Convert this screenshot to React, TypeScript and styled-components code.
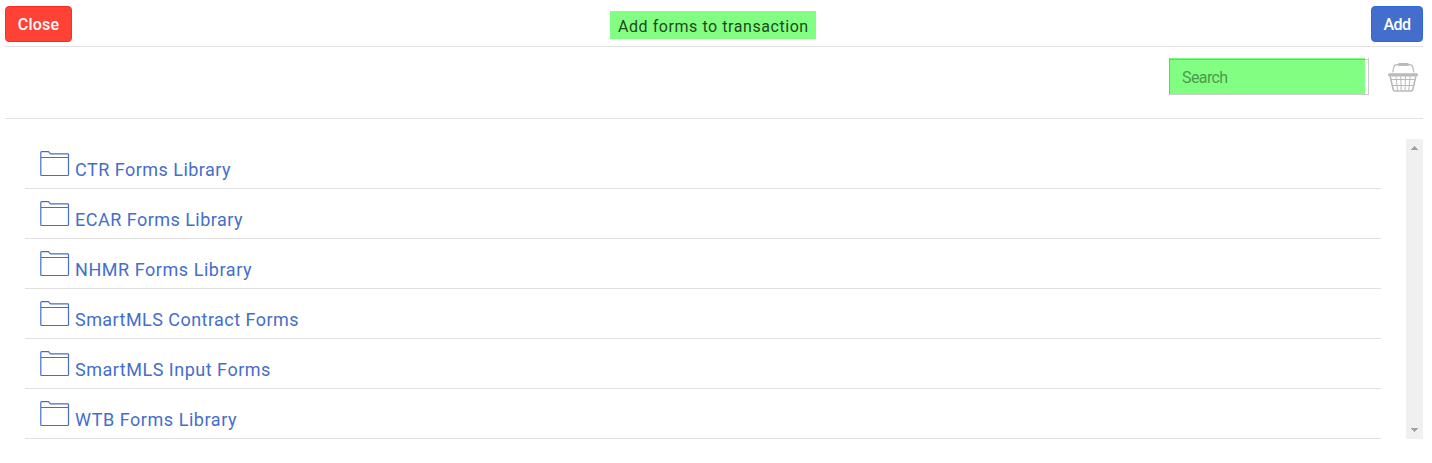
import React from "react";
import styled, { createGlobalStyle } from "styled-components";

const GlobalStyle = createGlobalStyle`
  *, *::before, *::after { box-sizing: border-box; }
  body {
    margin: 0;
    background: #fff;
    font-family: Roboto, "Noto Sans", sans-serif;
  }
`;

const Page = styled.main`
  display: flex;
  flex-direction: column;
  height: 463px;
  padding: 0 9px 0 5px;
`;

const Header = styled.header`
  display: grid;
  grid-template-columns: 605px 206px 1fr;
  height: 47px;
  padding-top: 6px;
  border-bottom: 1px solid #e2e2e2;
`;

const Button = styled.button<{ $tone: "danger" | "primary" }>`
  justify-self: ${(p) => (p.$tone === "danger" ? "start" : "end")};
  width: ${(p) => (p.$tone === "danger" ? 67 : 52)}px;
  height: 36px;
  padding: 1px 0 0;
  border: 1px solid ${(p) => (p.$tone === "danger" ? "#ff2a20" : "#2c68e0")};
  border-radius: 4px;
  background: ${(p) => (p.$tone === "danger" ? "#ff4136" : "#446ecb")};
  color: #fff;
  font: 500 16px/33px Roboto, sans-serif;
  letter-spacing: ${(p) => (p.$tone === "danger" ? 0.2 : -0.6)}px;
`;

const Title = styled.h1`
  height: 28px;
  margin: 5px 0 0;
  padding-left: 8px;
  background: #82ff82;
  color: #1d4a1d;
  font-size: 16px;
  font-weight: 400;
  line-height: 31px;
  letter-spacing: 0.56px;
  white-space: nowrap;
`;

const Toolbar = styled.div`
  display: flex;
  justify-content: flex-end;
  height: 72px;
  padding: 11px 4px 0 0;
  border-bottom: 1px solid #e2e2e2;
`;

const SearchBox = styled.label`
  display: flex;
  width: 200px;
  height: 37px;
  padding-right: 3px;
  border: 1px solid #ccc;
  border-top: 0;
  background: linear-gradient(#ccc, #ccc) 0 1px / 100% 1px no-repeat;
`;

const SearchInput = styled.input`
  width: 196px;
  height: 36px;
  margin-left: -1px;
  padding: 3px 12px 0 12px;
  border: 1px solid #66cc66;
  border-width: 0 0 0 1px;
  border-radius: 0;
  outline: 0;
  background: linear-gradient(#68cc68, #68cc68) 0 1px / 100% 1px no-repeat #82ff82;
  font: 400 16px/20px Roboto, sans-serif;
  letter-spacing: -0.6px;
  &::placeholder { color: #4b9a4b; opacity: 1; }
`;

const Basket = styled.svg`
  width: 32px;
  height: 32px;
  margin: 4px 0 0 18px;
`;

const Content = styled.section`
  display: flex;
  justify-content: space-between;
  height: 300px;
  margin: 20px 0 0 20px;
`;

const LibraryList = styled.ul`
  width: 1356px;
  margin: 0;
  padding: 0;
  list-style: none;
`;

const LibraryRow = styled.li`
  display: flex;
  height: 50px;
  padding: 12px 0 0 15px;
  border-bottom: 1px solid #e2dfe0;
  color: #446ecb;
`;

const FolderIcon = styled.svg`
  width: 30px;
  height: 26px;
  flex: none;
`;

const LibraryName = styled.span<{ $tracking: number }>`
  margin: 8px 0 0 5px;
  font-size: 18px;
  line-height: 22px;
  letter-spacing: ${(p) => p.$tracking}px;
  white-space: nowrap;
`;

const Scrollbar = styled.div`
  display: flex;
  flex-direction: column;
  justify-content: space-between;
  align-items: center;
  width: 17px;
  height: 300px;
  padding: 7px 0;
  background: #f0f0f0;
`;

const Arrow = styled.svg`
  width: 7px;
  height: 4px;
  fill: #a3a3a3;
  shape-rendering: crispEdges;
`;

const libraries = [
  { name: "CTR Forms Library", tracking: 0.48 },
  { name: "ECAR Forms Library", tracking: 0.48 },
  { name: "NHMR Forms Library", tracking: 0.55 },
  { name: "SmartMLS Contract Forms", tracking: 0.45 },
  { name: "SmartMLS Input Forms", tracking: 0.51 },
  { name: "WTB Forms Library", tracking: 0.55 },
];

export default function App() {
  return (
    <>
      <GlobalStyle />
      <Page>
        <Header>
          <Button $tone="danger">Close</Button>
          <Title>Add forms to transaction</Title>
          <Button $tone="primary">Add</Button>
        </Header>
        <Toolbar>
          <SearchBox>
            <SearchInput placeholder="Search" />
          </SearchBox>
          <Basket viewBox="0 0 32 32" fill="none" stroke="#bababa">
            <path d="M5.700 10.500 6.700 5.500Q7.300 2.700 10 2.700h12.500q2.700 0 3.300 2.800l1 5" strokeWidth="1.200" />
            <path d="M12.300 2.500h8.200" strokeWidth="3.200" strokeLinecap="round" />
            <path d="M2.500 12.800h27" strokeWidth="3.200" strokeLinecap="round" />
            <path d="M3.200 14.500 6.200 27.500q.3 1.500 1.700 1.500h16.200q1.400 0 1.700-1.500l3-13" strokeWidth="1.600" />
            <path d="M4 17.500h24M5 23.500h22M9 14.500l1.500 14M13.700 14.500l.5 14M18.500 14.500l-.5 14M23.200 14.500l-1.500 14" strokeWidth="1" />
          </Basket>
        </Toolbar>
        <Content>
          <LibraryList>
            {libraries.map(({ name, tracking }) => (
              <LibraryRow key={name}>
                <FolderIcon viewBox="0 0 30 26" fill="none" stroke="currentColor" strokeWidth="1.200">
                  <path d="M.8 6.500V1.400q0-.8.8-.8H8q.8 0 1.300.9l.5.700q.4.600 1.200.600h16.700q.800 0 .800.800v20.200q0 .700-.8.700H1.600q-.8 0-.8-.7V6.500h27.700" />
                </FolderIcon>
                <LibraryName $tracking={tracking}>{name}</LibraryName>
              </LibraryRow>
            ))}
          </LibraryList>
          <Scrollbar>
            <Arrow viewBox="0 0 7 4"><path d="M3 0h1v1h1v1h1v1h1v1H0V3h1V2h1V1h1z" /></Arrow>
            <Arrow viewBox="0 0 7 4"><path d="M0 0h7v1H6v1H5v1H4v1H3V3H2V2H1V1H0z" /></Arrow>
          </Scrollbar>
        </Content>
      </Page>
    </>
  );
}
